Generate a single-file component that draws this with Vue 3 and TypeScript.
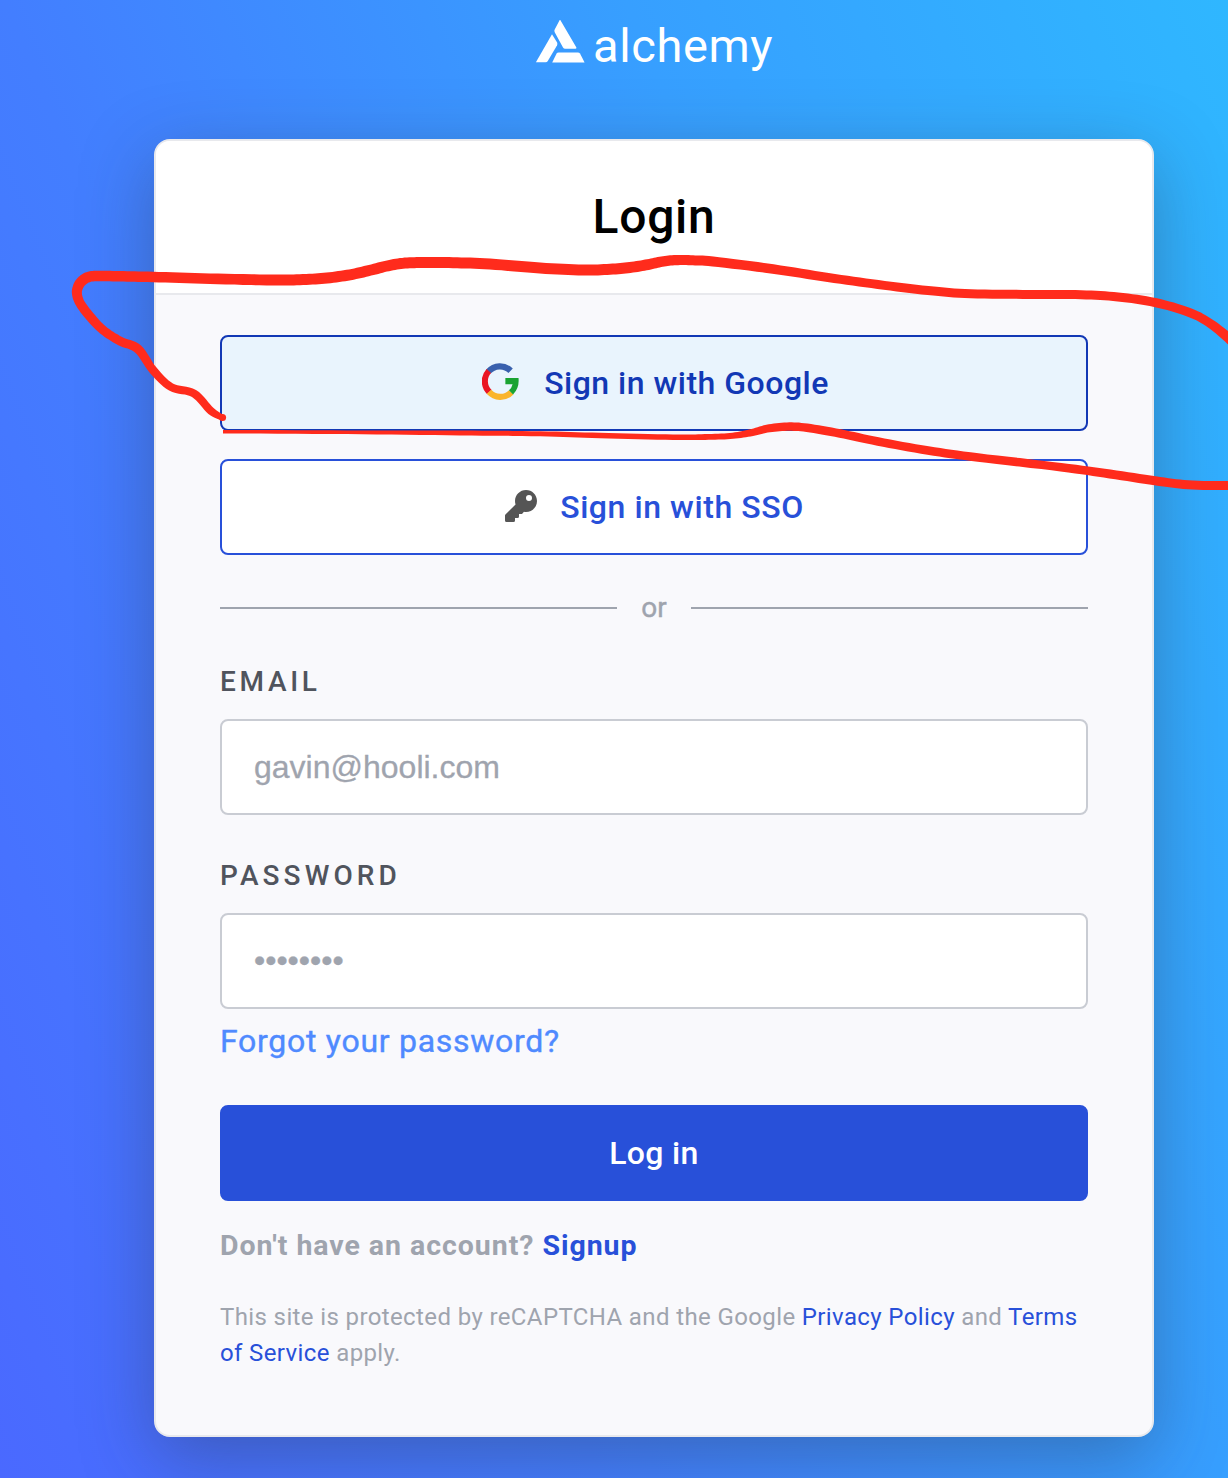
<script setup lang="ts">
type Point = [x: number, y: number, width: number]

// Centre points of the marker line with the pen width at each of them
const upper: Point[] = [
  [223, 418, 5.5], [211, 411, 8], [194, 393.5, 8], [171, 387, 8], [153, 370, 8.5], [138, 349, 9],
  [120, 341, 9], [103, 330, 9], [90, 316.5, 9.5], [80, 303, 9.5], [76.9, 293, 10], [78.6, 285.5, 10.3],
  [82.5, 280.5, 10.5], [88, 277.2, 10.5], [96, 276, 10.5], [120, 276.3, 10.5], [153, 277, 10.5],
  [210, 278.7, 10.5], [273, 280, 11], [303, 279.6, 11], [327, 278, 11], [350, 274.8, 11],
  [370, 270.3, 11], [388, 265.8, 11], [405, 263.1, 11], [425, 262.6, 11], [453, 262.7, 11],
  [490, 264, 11], [540, 268, 11], [583, 270, 11], [610, 269.3, 11], [630, 267.5, 11],
  [648, 264.6, 10.8], [662, 261.6, 10.5], [676, 260.1, 10.3], [693, 260.3, 10], [713, 261.5, 10],
  [773, 269, 9.5], [828, 277.5, 9], [878, 284.5, 9], [928, 290.5, 9], [971, 293.8, 9],
  [1030, 294.4, 9], [1081, 294.7, 9], [1118, 297, 9], [1155, 302.5, 9], [1188, 312, 9],
  [1208, 322, 9], [1228, 337.5, 10], [1240, 350, 10],
]
const lower: Point[] = [
  [223, 431.7, 3.5], [347, 432.2, 3.7], [460, 433, 5], [540, 433.8, 5], [600, 435.5, 5.5],
  [673, 437.2, 5.5], [705, 437, 5.8], [730, 436, 6], [750, 433, 7], [767, 428.7, 8], [787, 426.6, 8.5],
  [807, 427.8, 8.5], [840, 433.5, 8.5], [878, 441.5, 8.5], [928, 450.5, 8.5], [978, 457.5, 8.5],
  [1061, 467.2, 8.5], [1110, 474, 9], [1155, 480.8, 9], [1188, 484.8, 9], [1228, 485.5, 9],
  [1245, 484, 9],
]

function spline(a: number, b: number, c: number, d: number, t: number): number {
  return 0.5 * (2 * b + (c - a) * t + (2 * a - 5 * b + 4 * c - d) * t * t + (3 * b - a - 3 * c + d) * t * t * t)
}

function outline(points: Point[]): string {
  const line: Point[] = []
  const last = points.length - 1
  for (let i = 0; i < last; i++) {
    const a = points[Math.max(0, i - 1)]
    const b = points[i]
    const c = points[i + 1]
    const d = points[Math.min(last, i + 2)]
    for (let s = 0; s < 8; s++) {
      const t = s / 8
      line.push([spline(a[0], b[0], c[0], d[0], t), spline(a[1], b[1], c[1], d[1], t), b[2] + (c[2] - b[2]) * t])
    }
  }
  line.push(points[last])
  const left: string[] = []
  const right: string[] = []
  line.forEach(([x, y, w], i) => {
    const p = line[Math.max(0, i - 1)]
    const q = line[Math.min(line.length - 1, i + 1)]
    const len = Math.hypot(q[0] - p[0], q[1] - p[1]) || 1
    const nx = (-(q[1] - p[1]) / len) * (w / 2)
    const ny = ((q[0] - p[0]) / len) * (w / 2)
    left.push(`${(x + nx).toFixed(1)} ${(y + ny).toFixed(1)}`)
    right.unshift(`${(x - nx).toFixed(1)} ${(y - ny).toFixed(1)}`)
  })
  return `M${left.join('L')}L${right.join('L')}Z`
}

const upperPath = outline(upper)
const lowerPath = outline(lower)
</script>

<template>
  <main class="page">
    <header class="brand">
      <svg class="brand-mark" width="50" height="44" viewBox="0 0 50 44">
        <path d="M25.300 0 41.400 27.400Q41.600 28.700 40.400 28.700H30.200q-1.400 0-2.200-1.200L19.700 12.200q-.7-1.400 0-2.700L24.700 0z" />
        <path d="M17 14.200 22.100 22.600q.6 1.300 0 2.600L12.800 41q-.8 1.300-2.200 1.300H.9z" />
        <path d="M17.200 42.400 21.600 33.400q.5-1 2-1H42.800q1.500 0 2.200 1.200L49.600 42.400z" />
      </svg>
      <span class="brand-name">alchemy</span>
    </header>

    <section class="card">
      <h1 class="title">Login</h1>
      <form class="body" @submit.prevent>
        <button type="button" class="btn google">
          <svg width="37" height="37" viewBox="0 0 38 38" fill="none" stroke-width="6.300">
            <path stroke="#3960ad" d="M6.600 8.800A15.600 15.600 0 0 1 29.400 8" />
            <path stroke="#ea1523" d="M7.500 29.800A15.600 15.600 0 0 1 7 8.200" />
            <path stroke="#fab52b" d="M30 30.100A15.600 15.600 0 0 1 7.200 29.500" />
            <path fill="#1aa332" d="M24 15.500H37.500Q38.600 25.500 31.900 32.400L27.700 28.100Q30.600 25.500 31.400 21.800H24z" />
          </svg>
          <span>Sign in with Google</span>
        </button>
        <button type="button" class="btn sso">
          <svg width="32" height="32" viewBox="0 0 512 512">
            <path fill="#555" d="M512 176c0 97.200-78.800 176-176 176-11.200 0-22.200-1.100-32.800-3.100l-24 27A24 24 0 0 1 261.200 384H224v40a24 24 0 0 1-24 24h-40v40a24 24 0 0 1-24 24H24a24 24 0 0 1-24-24v-78.100c0-6.400 2.500-12.500 7-17l161.800-161.800C163 213.800 160 195.300 160 176 160 78.800 238.800 0 336 0s176 78.500 176 176zM336 128a48 48 0 1 0 96 0 48 48 0 1 0-96 0z" />
          </svg>
          <span>Sign in with SSO</span>
        </button>

        <div class="divider"><i></i><span>or</span><i></i></div>

        <label class="label email-label" for="email">EMAIL</label>
        <input id="email" class="field" type="email" placeholder="gavin@hooli.com" />
        <label class="label password-label" for="password">PASSWORD</label>
        <input id="password" class="field password" type="password" placeholder="••••••••" />
        <a class="forgot">Forgot your password?</a>
        <button type="submit" class="btn submit">Log in</button>
        <p class="signup">Don't have an account? <a>Signup</a></p>
        <p class="legal">
          This site is protected by reCAPTCHA and the Google <a>Privacy Policy</a> and <a>Terms<br />of Service</a> apply.
        </p>
      </form>
    </section>

    <svg class="marker" width="1228" height="1478" viewBox="0 0 1228 1478">
      <path :d="upperPath" />
      <path :d="lowerPath" />
      <circle cx="222.500" cy="417.500" r="3.600" />
    </svg>
  </main>
</template>

<style>
body {
  margin: 0;
}
</style>

<style scoped>
* {
  box-sizing: border-box;
}
.page {
  position: relative;
  width: 1228px;
  height: 1478px;
  overflow: hidden;
  padding-left: 154px;
  background: linear-gradient(68deg, #4a69ff 0%, #437eff 33%, #379fff 67%, #2fb7ff 100%);
  font-family: Roboto, "Liberation Sans", sans-serif;
}
.brand {
  display: flex;
  width: 1000px;
  height: 139px;
  padding: 20px 0 0 381px;
}
.brand-mark {
  fill: #fff;
  flex: none;
}
.brand-name {
  margin-left: 8px;
  height: 52px;
  line-height: 51px;
  font-size: 47px;
  letter-spacing: 0.6px;
  color: #fff;
}
.card {
  width: 1000px;
  height: 1298px;
  border: 2px solid #e8e9ed;
  border-radius: 16px;
  background: #f9f9fc;
  box-shadow: 0 20px 72px rgba(40, 44, 52, 0.34);
  overflow: hidden;
}
.title {
  margin: 0;
  height: 154px;
  border-bottom: 2px solid #e8e9ed;
  background: #fff;
  text-align: center;
  font-size: 48px;
  font-weight: 500;
  line-height: 152px;
  letter-spacing: 0.7px;
  color: #000;
}
.body {
  display: flex;
  flex-direction: column;
  padding: 40px 64px 0;
}
.btn {
  display: flex;
  align-items: center;
  justify-content: center;
  height: 96px;
  padding: 0;
  border: 2px solid #2850d9;
  border-radius: 8px;
  background: #fff;
  color: #2850d9;
  font-family: inherit;
  font-size: 32px;
  font-weight: 500;
  white-space: nowrap;
}
.btn svg {
  margin-bottom: 3px;
}
.google {
  gap: 25px;
  padding-left: 3px;
  border-color: #1238b5;
  background: #e9f4fd;
  color: #1238b5;
  letter-spacing: 0.5px;
}
.sso {
  gap: 23px;
  padding-left: 1px;
  margin-top: 28px;
  letter-spacing: 0.57px;
}
.divider {
  display: flex;
  align-items: center;
  height: 32px;
  margin-top: 37px;
  color: #9fa4ae;
  font-size: 28px;
}
.divider i {
  flex: 1;
  height: 2px;
  background: #9fa4ae;
}
.divider span {
  width: 74px;
  padding-bottom: 2px;
  text-align: center;
  -webkit-text-stroke: 0.4px #9fa4ae;
}
.label {
  height: 36px;
  margin-top: 39px;
  line-height: 38px;
  color: #50545d;
  font-size: 28px;
  font-weight: 500;
}
.email-label {
  letter-spacing: 3.7px;
}
.password-label {
  margin-top: 42px;
  letter-spacing: 4.1px;
}
.field {
  height: 96px;
  margin-top: 20px;
  padding: 0 32px;
  border: 2px solid #c9ccd3;
  border-radius: 8px;
  background: #fff;
  font-family: "Liberation Sans", sans-serif;
  font-size: 32px;
  outline: none;
}
.password {
  padding-bottom: 2px;
}
.field::placeholder {
  color: #9fa4ae;
  opacity: 1;
  -webkit-text-stroke: 0.3px #9fa4ae;
}
.forgot {
  height: 40px;
  margin-top: 12px;
  line-height: 40px;
  font-size: 32px;
  letter-spacing: 0.72px;
  color: #4f8aff;
  -webkit-text-stroke: 0.4px #4f8aff;
}
.submit {
  margin-top: 44px;
  background: #2850d9;
  color: #fff;
  letter-spacing: 0.35px;
}
.signup {
  margin: 25px 0 0;
  height: 40px;
  line-height: 40px;
  font-size: 28.5px;
  font-weight: 700;
  letter-spacing: 0.95px;
  color: #9fa4ae;
}
.legal {
  margin: 33px 0 0;
  font-size: 24px;
  line-height: 36px;
  letter-spacing: 0.38px;
  white-space: nowrap;
  color: #9fa4ae;
}
.signup a,
.legal a {
  color: #2850d9;
}
.marker {
  position: absolute;
  inset: 0;
  fill: #ff2b1c;
  pointer-events: none;
}
</style>
